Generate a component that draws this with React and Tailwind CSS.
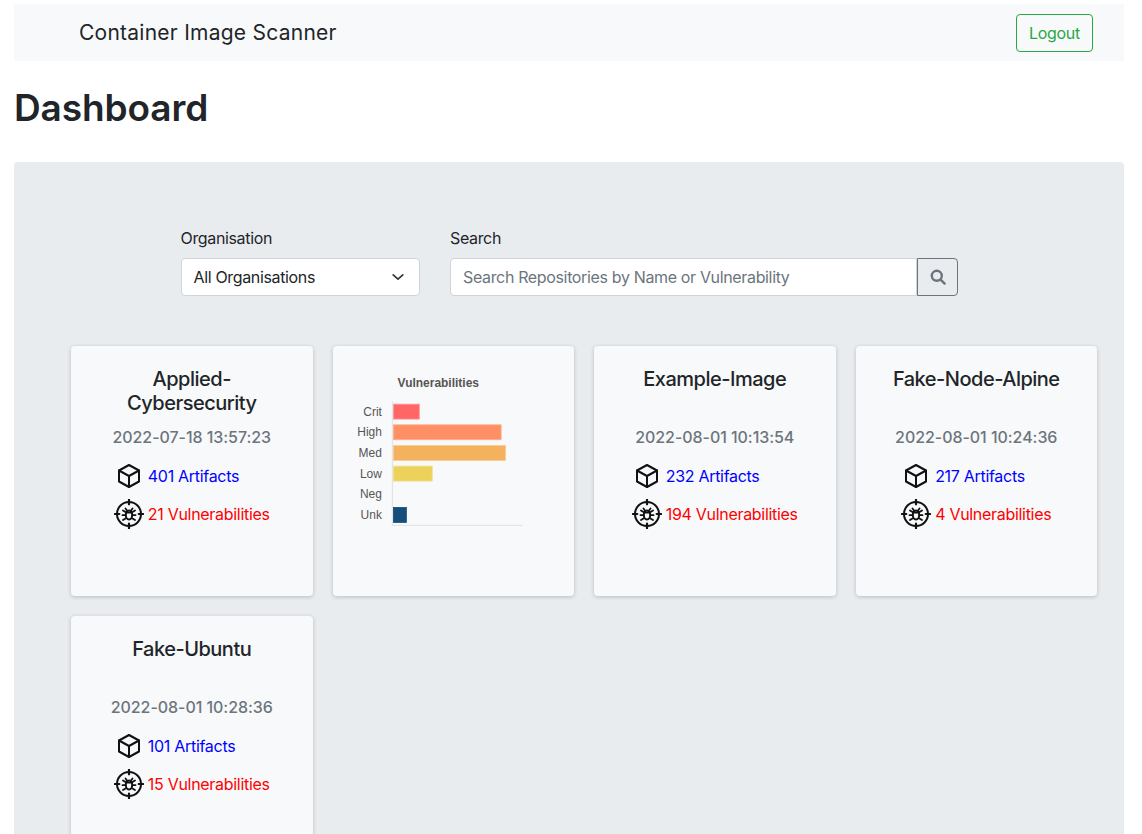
import React from "react";

const sans = "font-['Inter',sans-serif]";

function CubeIcon({ className }) {
  return (
    <svg viewBox="0 0 24 24" className={className} fill="none" stroke="#111" strokeWidth="2" strokeLinejoin="round" strokeLinecap="round">
      <path d="M12 1 22 6.5v11L12 23 2 17.5v-11z" />
      <path d="M2 6.5 12 12l10-5.5M12 12v11" />
    </svg>
  );
}

function BugTarget({ className }) {
  return (
    <svg viewBox="0 0 30 30" className={className} fill="none" stroke="#111" strokeLinecap="round">
      <circle cx="15" cy="15" r="12" strokeWidth="2" />
      <path d="M15 0.8v4.5M15 24.7v4.5M0.8 15h4.5M24.7 15h4.5" strokeWidth="2.2" />
      <ellipse cx="15" cy="16" rx="3.2" ry="4.5" strokeWidth="2" />
      <path d="M13 11.5 11.5 9.5M17 11.5 18.5 9.5M11.5 13 9 11.5M18.5 13 21 11.5M11.5 16.2H8.5M18.5 16.2H21.5M11.5 19.5 9 21M18.5 19.5 21 21M12 13.5h6" strokeWidth="1.8" />
    </svg>
  );
}

function Card({ title, date, artifacts, vulns }) {
  return (
    <div className="h-[250px] rounded bg-[#f8f9fa] px-4 pt-[21px] text-center shadow-[0_1px_4px_rgba(0,0,0,0.2)]">
      <h5 className="mx-auto flex min-h-[58px] max-w-[180px] justify-center text-[20px] font-medium leading-[24px] tracking-[-0.5px] text-[#212529]">{title}</h5>
      <div className="text-[16px] font-medium leading-6 tracking-[-0.05px] text-[#6c757d]">{date}</div>
      <div className="mx-auto mt-[12px] grid w-fit grid-cols-[30px_auto] items-center gap-x-1 gap-y-[8px] text-left text-[16px] leading-[30px] tracking-[-0.3px]">
        <div className="flex justify-center"><CubeIcon className="h-6 w-6" /></div>
        <a className="text-[#0000ff]">{artifacts} Artifacts</a>
        <BugTarget className="h-[30px] w-[30px]" />
        <a className="text-[#ff0000]">{vulns} Vulnerabilities</a>
      </div>
    </div>
  );
}

const bars = [
  ["Crit", 26, "#ff6666", "#ff9a9a"],
  ["High", 108, "#ff9066", "#ffb08f"],
  ["Med", 112.5, "#f4b25e", "#f9cc92"],
  ["Low", 39, "#ecd25a", "#f3e08f"],
  ["Neg", 0, "#fff", "#fff"],
  ["Unk", 13, "#154d7c", "#154d7c"],
];

function ChartCard() {
  return (
    <div className="h-[250px] rounded bg-[#f8f9fa] shadow-[0_1px_4px_rgba(0,0,0,0.2)]">
      <svg viewBox="0 0 242 250" className="h-[250px] w-full" fontFamily="Liberation Sans, sans-serif">
        <text x="105.5" y="41" textAnchor="middle" fontSize="12" fontWeight="700" fill="#555">Vulnerabilities</text>
        {bars.map(([label, w, fill, stroke], i) => {
          const y = 58 + i * 20.7;
          return (
            <g key={label}>
              <text x="49" y={y + 11.6} textAnchor="end" fontSize="12" fill="#555">{label}</text>
              {w > 0 && <rect x="60.5" y={y} width={w} height="15" fill={fill} stroke={stroke} strokeWidth="0.8" />}
            </g>
          );
        })}
        <path d="M59.5 55v124.5H190" fill="none" stroke="#dfe1e5" strokeWidth="1" />
      </svg>
    </div>
  );
}

export default function App() {
  return (
    <div className={`h-screen overflow-hidden bg-white pl-[14px] pr-[18px] pt-1 ${sans} text-[#212529]`}>
      <nav className="flex h-[57px] items-center justify-between bg-[#f8f9fa] pl-[65px] pr-[31px]">
        <span className="text-[21px] leading-none tracking-[0.25px] text-[#212529]">Container Image Scanner</span>
        <button className="h-[38px] w-[77px] rounded border border-[#28a745] text-[16px] tracking-[-0.3px] text-[#28a745]">Logout</button>
      </nav>
      <h1 className="mt-5 text-[37px] font-semibold leading-[54px] tracking-[-0.1px]">Dashboard</h1>
      <main className="mt-[27px] rounded bg-[#e9ecef] pb-10 pl-[57px] pr-[27px] pt-[64px]">
        <div className="flex gap-[30px] pl-[109.5px] text-[16px] tracking-[-0.35px]">
          <div className="w-[239.5px]">
            <label className="mb-2 block leading-6">Organisation</label>
            <div className="flex h-[38px] items-center justify-between rounded border border-[#ced4da] bg-white pl-3 pr-[14px]">
              All Organisations
              <svg viewBox="0 0 16 16" className="h-[14px] w-[14px]" fill="none" stroke="#343a40" strokeWidth="2" strokeLinecap="round" strokeLinejoin="round"><path d="m2.5 5.5 5.5 5 5.5-5" /></svg>
            </div>
          </div>
          <div className="w-[508px]">
            <label className="mb-2 block leading-6">Search</label>
            <div className="flex h-[38px]">
              <div className="flex flex-1 items-center rounded-l border border-[#ced4da] bg-white pl-3 text-[#6c757d]">Search Repositories by Name or Vulnerability</div>
              <button className="flex w-[41px] items-center justify-center rounded-r border border-[#6c757d]">
                <svg viewBox="0 0 16 16" className="h-4 w-4" fill="none" stroke="#6c757d" strokeWidth="2.4" strokeLinecap="round"><circle cx="6.8" cy="6.8" r="5" /><path d="m10.6 10.6 4 4" /></svg>
              </button>
            </div>
          </div>
        </div>
        <div className="mt-[50px] grid grid-cols-4 gap-x-[20px] gap-y-[20px]">
          <Card title="Applied-Cybersecurity" date="2022-07-18 13:57:23" artifacts="401" vulns="21" />
          <ChartCard />
          <Card title="Example-Image" date="2022-08-01 10:13:54" artifacts="232" vulns="194" />
          <Card title="Fake-Node-Alpine" date="2022-08-01 10:24:36" artifacts="217" vulns="4" />
          <Card title="Fake-Ubuntu" date="2022-08-01 10:28:36" artifacts="101" vulns="15" />
        </div>
      </main>
    </div>
  );
}
